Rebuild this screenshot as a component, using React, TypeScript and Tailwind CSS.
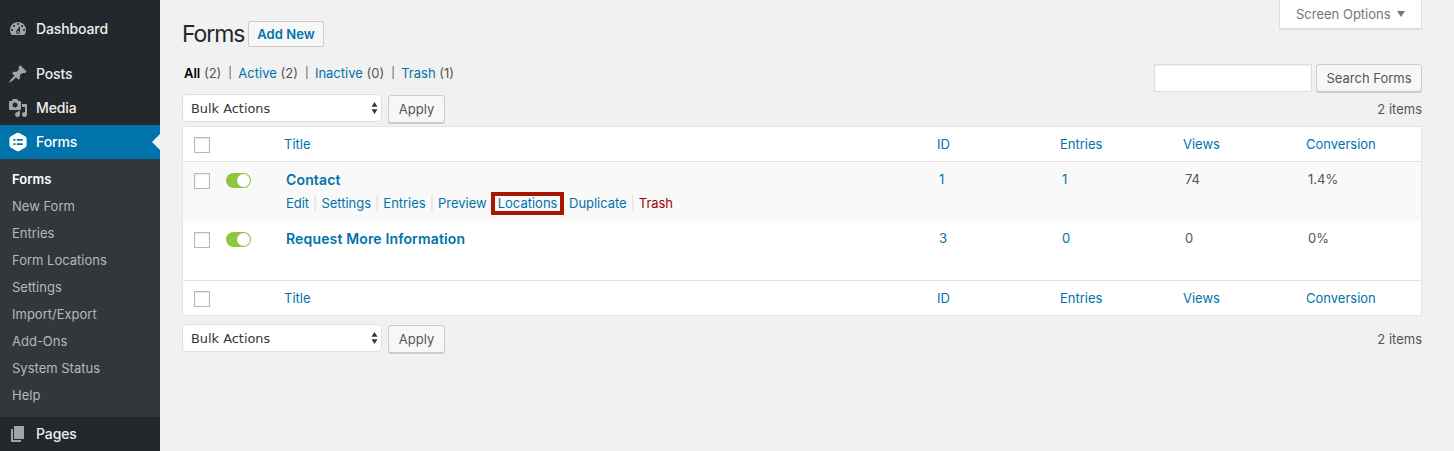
import type { ReactNode } from "react";

const submenu = ["New Form", "Entries", "Form Locations", "Settings", "Import/Export", "Add-Ons", "System Status", "Help"];

const icons = {
  dashboard:
    "M3.76 16h12.48c1.1-1.37 1.76-3.11 1.76-5 0-4.42-3.58-8-8-8s-8 3.58-8 8c0 1.89.66 3.63 1.76 5zM10 4c.55 0 1 .45 1 1s-.45 1-1 1-1-.45-1-1 .45-1 1-1zM6 6c.55 0 1 .45 1 1s-.45 1-1 1-1-.45-1-1 .45-1 1-1zm8 0c.55 0 1 .45 1 1s-.45 1-1 1-1-.45-1-1 .45-1 1-1zm-5.37 5.55L12 7v6c0 1.1-.9 2-2 2s-2-.9-2-2c0-.57.24-1.08.63-1.45zM4 10c.55 0 1 .45 1 1s-.45 1-1 1-1-.45-1-1 .45-1 1-1zm12 0c.55 0 1 .45 1 1s-.45 1-1 1-1-.45-1-1 .45-1 1-1zm-5 3c0-.55-.45-1-1-1s-1 .45-1 1 .45 1 1 1 1-.45 1-1z",
  posts:
    "M10.44 3.02l1.82-1.82 6.36 6.35-1.83 1.82c-1.05-.68-2.48-.57-3.41.36l-.75.75c-.92.93-1.04 2.35-.35 3.41l-1.83 1.82-2.41-2.41-2.8 2.79c-.42.42-3.38 2.71-3.8 2.29s1.86-3.39 2.28-3.81l2.79-2.79L4.1 9.36l1.83-1.82c1.05.69 2.48.57 3.4-.36l.75-.75c.93-.92 1.05-2.35.36-3.41z",
  media:
    "M13 11V4c0-.55-.45-1-1-1h-1.67L9 1H5L3.67 3H2c-.55 0-1 .45-1 1v7c0 .55.45 1 1 1h10c.55 0 1-.45 1-1zM7 4.5c1.38 0 2.5 1.12 2.5 2.5S8.38 9.5 7 9.5 4.5 8.38 4.5 7 5.62 4.5 7 4.5zM14 6h5v10.5c0 1.38-1.12 2.5-2.5 2.5S14 17.88 14 16.5s1.12-2.5 2.5-2.5c.17 0 .34.02.5.05V9h-3V6zm-4 8.05V13h2v3.5c0 1.38-1.12 2.5-2.5 2.5S7 17.88 7 16.5 8.12 14 9.5 14c.17 0 .34.02.5.05z",
  forms:
    "M8.7 1.1Q10 .4 11.3 1.1L17.4 4.6Q18.6 5.3 18.6 6.7V13.3Q18.6 14.7 17.4 15.4L11.3 18.9Q10 19.6 8.7 18.9L2.6 15.4Q1.4 14.7 1.4 13.3V6.7Q1.4 5.3 2.6 4.6ZM5.3 7v1.7h2.1V7zM8.8 7v1.7h5.9V7zM5.3 11.2v1.7h2.1v-1.7zM8.8 11.2v1.7h5.9v-1.7z",
  pages: "M6 15V2h10v13H6zm-1 1h8v2H3V5h2v11z",
};

function MenuItem({ icon, label, active }: { icon: keyof typeof icons; label: string; active?: boolean }) {
  return (
    <a className={`relative flex h-[34px] shrink-0 items-center pl-2 ${active ? "bg-[#0073aa] text-white" : "text-[#eeeeee]"}`}>
      <svg viewBox="0 0 20 20" className={`size-5 ${active ? "fill-white" : "fill-[#a0a5aa]"}`}>
        <path fillRule="evenodd" d={icons[icon]} />
      </svg>
      <span className="ml-2 text-sm font-medium tracking-[-0.12px]">{label}</span>
      {active && (
        <svg viewBox="0 0 8 16" className="absolute top-[9px] right-0 h-4 w-2 fill-[#f1f1f1]">
          <path d="M8 0v16L0 8z" />
        </svg>
      )}
    </a>
  );
}

function Button({ children, className = "" }: { children: ReactNode; className?: string }) {
  return (
    <button className={`h-[28px] rounded-[3px] border border-[#cccccc] bg-[#f7f7f7] pt-px text-[13px] whitespace-nowrap text-[#555555] shadow-[0_1px_0_#cccccc] ${className}`}>
      {children}
    </button>
  );
}

function Checkbox() {
  return <span className="block size-4 border border-[#b4b9be] bg-white shadow-[inset_0_1px_2px_rgba(0,0,0,0.1)]" />;
}

function Toggle() {
  return (
    <span className="flex h-[15px] w-[25px] items-center justify-end rounded-full bg-[#8dc63f] pr-px">
      <span className="size-[13px] rounded-full bg-white" />
    </span>
  );
}

function HeadRow() {
  return (
    <div className="grid h-[34px] grid-cols-[101px_653px_123px_123px_123px_1fr] items-start pt-[8px] leading-[18px] text-[#0073aa]">
      <div className="pt-[2px] pl-[11px]">
        <Checkbox />
      </div>
      <span>Title</span>
      <span>ID</span>
      <span>Entries</span>
      <span>Views</span>
      <span>Conversion</span>
    </div>
  );
}

function Row({ title, data, shaded, children }: { title: string; data: string[]; shaded?: boolean; children?: ReactNode }) {
  return (
    <div className={`grid h-[59px] grid-cols-[43px_60px_653px_123px_123px_123px_1fr] pt-[9px] leading-[16px] ${shaded ? "bg-[#f9f9f9]" : "bg-white"}`}>
      <div className="pt-[2px] pl-[11px]">
        <Checkbox />
      </div>
      <div className="pt-[2px]">
        <Toggle />
      </div>
      <div>
        <div className="text-sm leading-[18px] font-semibold tracking-[0.15px] text-[#0073aa]">{title}</div>
        {children}
      </div>
      <span className="text-[#0073aa]">{data[0]}</span>
      <span className="text-[#0073aa]">{data[1]}</span>
      <span>{data[2]}</span>
      <span>{data[3]}</span>
    </div>
  );
}

function BulkBar() {
  return (
    <div className="flex items-start justify-between">
      <div className="flex">
        <div className="flex h-[28px] w-[200px] items-center justify-between rounded-[5px] border border-[#dddddd] bg-white pr-[3px] pl-2 font-['DejaVu_Sans',sans-serif] text-[12.9px] text-[#32373c]">
          <span className="pt-px">Bulk Actions</span>
          <svg viewBox="0 0 7 12" className="h-3 w-[7px] fill-[#32373c]">
            <path d="M3.5 0L6.5 4.8H.5zM3.5 12L6.5 7.2H.5z" />
          </svg>
        </div>
        <Button className="mt-px ml-[6px] w-[57px]">Apply</Button>
      </div>
      <span className="pt-[6px] leading-[18px]">2 items</span>
    </div>
  );
}

function Filter({ label, count, current }: { label: string; count: number; current?: boolean }) {
  return (
    <span>
      <a className={current ? "font-semibold text-black" : "text-[#0073aa]"}>{label}</a> ({count})
    </span>
  );
}

const FilterSep = () => <span className="w-[3px] text-center text-[11px]">|</span>;

const Sep = () => <span className="text-[#dddddd]">|</span>;

export default function App() {
  return (
    <div className="flex h-[451px] w-[1454px] overflow-hidden bg-[#f1f1f1] font-[Inter,sans-serif] text-[13px] text-[#555555]">
      <nav className="flex w-40 shrink-0 flex-col bg-[#23282d] pt-3">
        <MenuItem icon="dashboard" label="Dashboard" />
        <div className="h-[11px] shrink-0" />
        <MenuItem icon="posts" label="Posts" />
        <MenuItem icon="media" label="Media" />
        <MenuItem icon="forms" label="Forms" active />
        <div className="flex h-[258px] shrink-0 flex-col bg-[#32373c] pt-[7px] pl-3 leading-[27px] text-[#b4b9be]">
          <a className="font-semibold text-white">Forms</a>
          {submenu.map((item) => (
            <a key={item}>{item}</a>
          ))}
        </div>
        <MenuItem icon="pages" label="Pages" />
      </nav>

      <main className="flex w-[1262px] flex-col pl-[22px]">
        <div className="flex h-[64px] items-start justify-between">
          <div className="flex pt-[21px]">
            <h1 className="w-[66px] text-[23px] leading-[27px] tracking-[-1.1px] text-[#23282d]">Forms</h1>
            <a className="flex h-[26px] w-[76px] items-center justify-center rounded-[2px] border border-[#cccccc] bg-[#f7f7f7] pt-[2px] font-semibold tracking-[0.05px] text-[#0073aa]">
              Add New
            </a>
          </div>
          <button className="flex h-[29px] w-[143px] items-center border border-t-0 border-[#dddddd] bg-white pl-4 text-[#72777c] shadow-[0_1px_0_rgba(0,0,0,0.08)]">
            <span className="pt-[2px]">Screen Options</span>
            <svg viewBox="0 0 8 6" className="ml-[6px] h-[6px] w-2 fill-[#72777c]">
              <path d="M0 0h8L4 6z" />
            </svg>
          </button>
        </div>

        <div className="flex h-[30px] items-start justify-between">
          <div className="flex gap-[7px] pl-[2px] leading-[18px]">
            <Filter label="All" count={2} current />
            <FilterSep />
            <Filter label="Active" count={2} />
            <FilterSep />
            <Filter label="Inactive" count={0} />
            <FilterSep />
            <Filter label="Trash" count={1} />
          </div>
          <div className="flex gap-1">
            <input className="h-[28px] w-[158px] border border-[#dddddd] bg-white shadow-[inset_0_1px_2px_rgba(0,0,0,0.07)]" />
            <Button className="w-[106px]">Search Forms</Button>
          </div>
        </div>

        <div className="h-[32px]">
          <BulkBar />
        </div>

        <section className="mb-[8px] w-[1240px] border border-[#e5e5e5] bg-white">
          <HeadRow />
          <div className="h-px bg-[#e1e1e1]" />
          <Row title="Contact" data={["1", "1", "74", "1.4%"]} shaded>
            <div className="flex items-center pt-[5px] leading-[18px] text-[#0073aa]">
              <div className="flex gap-1 tracking-[-0.02px]">
                <a>Edit</a>
                <Sep />
                <a>Settings</a>
                <Sep />
                <a>Entries</a>
                <Sep />
                <a>Preview</a>
              </div>
              <a className="-my-1 ml-[4.5px] flex h-[23px] w-[73px] items-center justify-center border-4 border-[#a81600]">Locations</a>
              <div className="ml-[5px] flex gap-1 tracking-[-0.05px]">
                <a>Duplicate</a>
                <Sep />
                <a className="text-[#a00000]">Trash</a>
              </div>
            </div>
          </Row>
          <Row title="Request More Information" data={["3", "0", "0", "0%"]} />
          <div className="h-px bg-[#e1e1e1]" />
          <HeadRow />
        </section>

        <BulkBar />
      </main>
    </div>
  );
}
